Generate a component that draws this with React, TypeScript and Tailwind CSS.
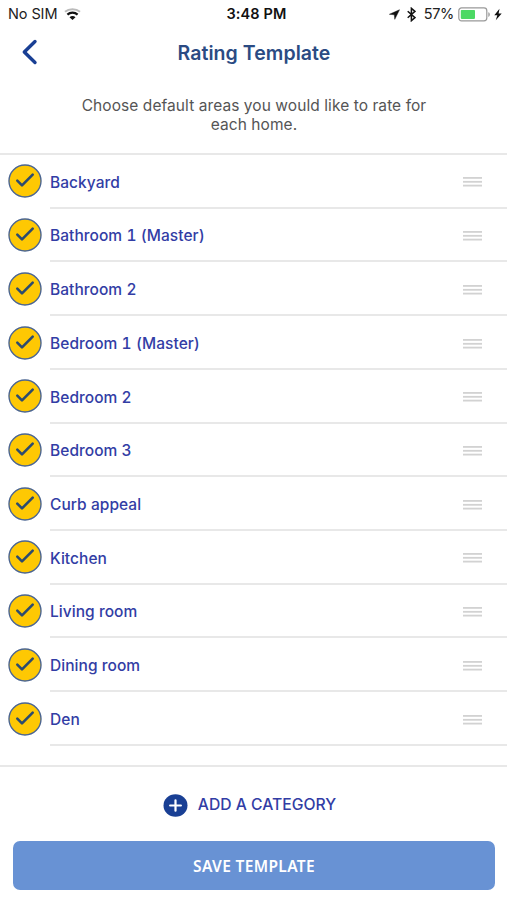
import React from 'react';

const areas = [
  'Backyard',
  'Bathroom 1 (Master)',
  'Bathroom 2',
  'Bedroom 1 (Master)',
  'Bedroom 2',
  'Bedroom 3',
  'Curb appeal',
  'Kitchen',
  'Living room',
  'Dining room',
  'Den',
];

const StatusBar: React.FC = () => (
  <div className="grid grid-cols-3 items-center h-7 pl-2 pr-[5px] text-[14.5px] leading-none text-[#222]">
    <div className="flex items-center gap-[7px]">
      <span className="tracking-[-0.1px]">No SIM</span>
      <svg width="17" height="12" viewBox="0 0 17 12" fill="none">
        <path d="M1 3.8C5 .3 12 .3 16 3.8" stroke="#bbb" strokeWidth="1.9" />
        <path d="M3.4 6.6c2.9-2.7 7.3-2.7 10.2 0" stroke="#111" strokeWidth="2.2" />
        <path d="M5.5 9.2c1.7-1.6 4.3-1.6 6 0L8.5 12z" fill="#111" />
      </svg>
    </div>
    <span className="pl-[3px] text-center font-semibold tracking-[0.1px] text-[#111]">3:48 PM</span>
    <div className="flex items-center justify-end">
      <svg className="mr-[7px]" width="11" height="11" viewBox="0 0 12 11">
        <path d="M11.5.3 6.3 10.8 5.8 5.8.4 5.3z" fill="#111" stroke="#111" strokeWidth=".5" />
      </svg>
      <svg className="mr-2" width="9" height="15" viewBox="0 0 9 15" fill="none" stroke="#111" strokeWidth="1.5">
        <path d="m.7 4.2 7.300 6.500-3.600 3V1.300l3.600 3L.7 10.800" />
      </svg>
      <span className="tracking-[-0.3px]">57%</span>
      <svg className="ml-[4px] mr-[3px]" width="33" height="15" viewBox="0 0 33 15">
        <rect x=".8" y=".9" width="28" height="13" rx="2.8" fill="#fff" stroke="#999" strokeWidth="1.2" />
        <rect x="2.8" y="2.9" width="14.2" height="9" rx=".8" fill="#4cd964" />
        <path d="M30.300 5.200c2 .5 2 4.200 0 4.700z" fill="#999" />
      </svg>
      <svg width="8" height="13" viewBox="0 0 8 13">
        <path d="M5.500.7.3 7.200h3L1.800 12.300 7.700 5.400H4.600z" fill="#111" />
      </svg>
    </div>
  </div>
);

const CheckBadge: React.FC = () => (
  <svg className="shrink-0" width="34" height="34" viewBox="0 0 34 34" fill="none">
    <circle cx="17" cy="17" r="16" fill="#fec803" stroke="#4b6591" strokeWidth="1.4" />
    <path d="m9.300 16.700 4.700 4.700L24.700 10.700" stroke="#2b4b70" strokeWidth="2.6" strokeLinecap="round" strokeLinejoin="round" />
  </svg>
);

const DragHandle: React.FC = () => (
  <svg width="19" height="10" viewBox="0 0 19 10" fill="#d2d2d2">
    <rect y="0" width="19" height="1.8" />
    <rect y="3.9" width="19" height="1.8" />
    <rect y="7.7" width="19" height="1.8" />
  </svg>
);

const AreaRow: React.FC<{ name: string }> = ({ name }) => (
  <li className="flex h-[53.73px] pl-2">
    <div className="flex w-[42px] shrink-0 items-center pb-px">
      <CheckBadge />
    </div>
    <div className="flex flex-1 items-center justify-between border-b-2 border-[#e8e8e8] pr-[25px] pt-[3px]">
      <span className="text-[15.5px] font-medium tabular-nums tracking-[0.05px] text-[#323da5]">{name}</span>
      <DragHandle />
    </div>
  </li>
);

export default function App() {
  return (
    <div className="flex h-[900px] w-[507px] flex-col overflow-hidden bg-white font-['Inter',sans-serif]">
      <StatusBar />

      {/* Title */}
      <header className="flex h-[49px] items-center pl-[21px] pr-[20px]">
        <svg className="mb-0.5" width="17" height="26" viewBox="0 0 17 26" fill="none">
          <path d="M14 2.500 3.300 13 14 23.500" stroke="#193f94" strokeWidth="3.4" strokeLinecap="round" strokeLinejoin="round" />
        </svg>
        <h1 className="flex-1 pr-[17px] pt-[2px] text-center text-[19.5px] font-semibold tracking-[0.06px] text-[#2b4b83]">Rating Template</h1>
      </header>

      <p className="h-[76px] pl-px pt-[19px] text-center text-[15.5px] leading-[19px] tracking-[0.07px] text-[#555]">
        Choose default areas you would like to rate for
        <br />
        each home.
      </p>

      {/* Areas */}
      <ul className="h-[614px] shrink-0 border-b-2 border-t-2 border-[#e8e8e8]">
        {areas.map((name) => (
          <AreaRow key={name} name={name} />
        ))}
      </ul>

      <button className="flex h-[74px] shrink-0 items-center justify-center gap-[10px] pr-[8px] pt-[2px] text-[15.7px] font-medium text-[#323da5]">
        <svg width="25" height="23" viewBox="0 0 25 23">
          <ellipse cx="12.5" cy="11.5" rx="12" ry="11.2" fill="#193f94" />
          <path d="M12.500 6.300v10.400M7.100 11.500h10.800" stroke="#fff" strokeWidth="2.2" strokeLinecap="round" />
        </svg>
        ADD A CATEGORY
      </button>

      <button className="ml-[13px] mr-[12px] h-[49px] shrink-0 rounded-[7px] bg-[#6892d4] pt-[2px] font-['Noto_Sans',sans-serif] text-[15.5px] font-semibold tracking-[0.35px] text-white">
        SAVE TEMPLATE
      </button>
    </div>
  );
}
